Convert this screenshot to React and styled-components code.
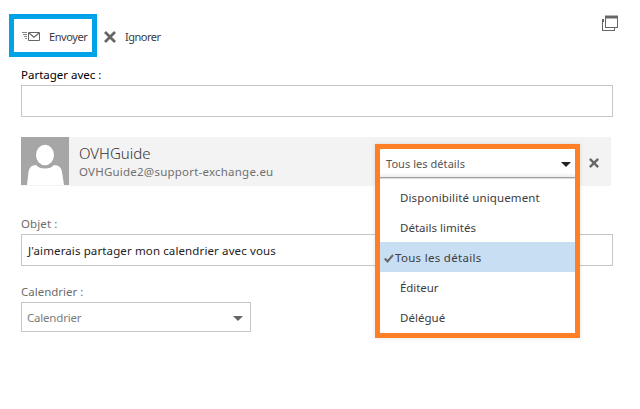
import React from "react";
import styled, { createGlobalStyle } from "styled-components";

const Global = createGlobalStyle`
  * { box-sizing: border-box; }
  body {
    margin: 0;
    background: #fff;
    overflow: hidden;
    font-family: "Noto Sans", "Open Sans", sans-serif;
  }
  svg { display: block; flex: none; }
`;

const Page = styled.main`
  position: relative;
  width: 640px;
  height: 409px;
  background: #fff;
`;

const Toolbar = styled.header`
  display: flex;
  height: 67px;
  padding: 14px 22px 0 9px;
`;

const SendButton = styled.button`
  display: flex;
  align-items: center;
  width: 88px;
  height: 43px;
  padding: 2px 0 0 8px;
  border: 5px solid #00a2e8;
  background: #fff;
  font: inherit;
  gap: 8px;
`;

const IgnoreButton = styled.button`
  display: flex;
  align-items: center;
  height: 43px;
  padding: 2px 0 0 7px;
  border: 0;
  background: none;
  font: inherit;
  gap: 9px;
`;

const PopOutButton = styled.button`
  margin-left: auto;
  align-self: flex-start;
  padding: 1px 0 0;
  border: 0;
  background: none;
`;

const Text = styled.span`
  font-size: ${(p) => p.$size || 11.5}px;
  font-weight: ${(p) => p.$weight || 400};
  line-height: 16px;
  letter-spacing: ${(p) => p.$spacing || 0}px;
  color: ${(p) => p.$color || "#3c3c3c"};
  white-space: nowrap;
`;

const Form = styled.form`
  display: flex;
  flex-direction: column;
  padding: 0 27px 0 21px;
`;

const Field = styled.label`
  display: flex;
  flex-direction: column;
  gap: 2px;
  margin-bottom: ${(p) => p.$after}px;
`;

const InputBox = styled.div`
  display: flex;
  align-items: center;
  width: 592px;
  height: 32px;
  padding: 2px 6px 0;
  border: 1px solid #c6c6c6;
`;

const SelectBox = styled(InputBox)`
  justify-content: space-between;
  width: 230px;
  height: 30px;
  padding: 2px 7px 0 5px;
`;

const Person = styled.section`
  display: flex;
  width: 590px;
  height: 49px;
  margin-bottom: 30px;
  padding-right: 12px;
  background: #f3f3f3;
`;

const PersonInfo = styled.div`
  display: flex;
  flex-direction: column;
  padding: 8px 0 0 10px;
  gap: 3px;
`;

const RemoveButton = styled.button`
  margin-left: auto;
  padding: 3px 0 0;
  border: 0;
  background: none;
`;

const Dropdown = styled.div`
  position: absolute;
  left: 375px;
  top: 144px;
  width: 205px;
  height: 194px;
  border: 5px solid #ff7f27;
  background: #fff;
  box-shadow: 0 0 4px rgba(0, 0, 0, 0.12);
`;

const DropdownHead = styled.div`
  display: flex;
  align-items: center;
  justify-content: space-between;
  height: 29px;
  padding: 2px 4px 0 6px;
  border-bottom: 1px solid #a0a0a0;
  background: linear-gradient(#fff 85%, #ececec);
  box-shadow: 0 1px 0 #dedede;
`;

const Options = styled.ul`
  margin: 0;
  padding: 4px 0 0;
  list-style: none;
`;

const Option = styled.li`
  display: flex;
  align-items: center;
  height: 30px;
  padding: 2px 0 0 ${(p) => (p.$selected ? 4 : 20)}px;
  background: ${(p) => (p.$selected ? "#c8dff3" : "transparent")};
  gap: 1px;
`;

const SendIcon = () => (
  <svg width="19" height="11" viewBox="0 0 19 11" fill="none" stroke="#666">
    <path d="M0 1.5H5M1 3.5H5M2 5.5H5M3 7.5H5" strokeWidth=".9" stroke="#777" />
    <path d="M6.5 1.5H17.5V9.5H6.5Z" />
    <path d="M7 2L12 6.2L17 2" strokeWidth="1.1" />
  </svg>
);

const CrossIcon = ({ size, weight }) => (
  <svg width={size} height={size} viewBox="0 0 12 12" fill="none" stroke="#666" strokeWidth={weight}>
    <path d="M1 1L11 11M11 1L1 11" />
  </svg>
);

const PopOutIcon = () => (
  <svg width="16" height="16" viewBox="0 0 16 16" shapeRendering="crispEdges">
    <path d="M0 4H2V7H1V15H12V13H13V16H0Z" fill="#666" />
    <path d="M3 0H16V13H3ZM4 4V12H15V4Z" fill="#666" fillRule="evenodd" />
    <path d="M3 0H16V1H3ZM4 3H15V4H4Z" fill="#b5b5b5" />
  </svg>
);

const Avatar = () => (
  <svg width="48" height="48" viewBox="0 0 48 48">
    <path d="M0 0H48V48H0Z" fill="#a6a6a6" />
    <ellipse cx="24" cy="18" rx="9" ry="10.3" fill="#fff" />
    <path d="M6 48L7.5 35Q8.5 28 15 28Q18 31.5 24 31.5Q30 31.5 33 28Q40 28 41 35L43 48Z" fill="#fff" />
  </svg>
);

const Caret = ({ color }) => (
  <svg width="10" height="5" viewBox="0 0 10 5">
    <path d="M0 0H10L5 5Z" fill={color} />
  </svg>
);

const Check = () => (
  <svg width="10" height="9" viewBox="0 0 10 9" fill="none" stroke="#666" strokeWidth="2">
    <path d="M.8 4.5L3.5 7.4L9 1" />
  </svg>
);

const rights = [
  { label: "Disponibilité uniquement", spacing: 0.12 },
  { label: "Détails limités", spacing: 0.02 },
  { label: "Tous les détails", spacing: 0.3, selected: true },
  { label: "Éditeur", spacing: -0.08 },
  { label: "Délégué", spacing: 0.02 },
];

export default function App() {
  return (
    <Page>
      <Global />
      <Toolbar>
        <SendButton type="button">
          <SendIcon />
          <Text $size={11} $spacing={-0.4}>Envoyer</Text>
        </SendButton>
        <IgnoreButton type="button">
          <CrossIcon size={12} weight={2.8} />
          <Text $size={11} $spacing={-0.5}>Ignorer</Text>
        </IgnoreButton>
        <PopOutButton type="button" aria-label="Ouvrir dans une fenêtre">
          <PopOutIcon />
        </PopOutButton>
      </Toolbar>
      <Form>
        <Field $after={20}>
          <Text $color="#000">Partager avec :</Text>
          <InputBox />
        </Field>
        <Person>
          <Avatar />
          <PersonInfo>
            <Text $size={15} $weight={300} $color="#333">OVHGuide</Text>
            <Text $color="#707070" $spacing={0.22}>OVHGuide2@support-exchange.eu</Text>
          </PersonInfo>
          <RemoveButton type="button" aria-label="Supprimer">
            <CrossIcon size={10} weight={2.8} />
          </RemoveButton>
        </Person>
        <Field $after={18}>
          <Text $color="#6c6c6c" $spacing={0.1}>Objet :</Text>
          <InputBox>
            <Text $color="#222" $spacing={0.12}>J'aimerais partager mon calendrier avec vous</Text>
          </InputBox>
        </Field>
        <Field $after={0}>
          <Text $color="#6c6c6c">Calendrier :</Text>
          <SelectBox>
            <Text $color="#7c7c7c" $spacing={-0.2}>Calendrier</Text>
            <Caret color="#666" />
          </SelectBox>
        </Field>
      </Form>
      <Dropdown>
        <DropdownHead>
          <Text $size={11} $color="#555" $spacing={0.05}>Tous les détails</Text>
          <Caret color="#222" />
        </DropdownHead>
        <Options>
          {rights.map((r) => (
            <Option key={r.label} $selected={r.selected}>
              {r.selected && <Check />}
              <Text $spacing={r.spacing}>{r.label}</Text>
            </Option>
          ))}
        </Options>
      </Dropdown>
    </Page>
  );
}
